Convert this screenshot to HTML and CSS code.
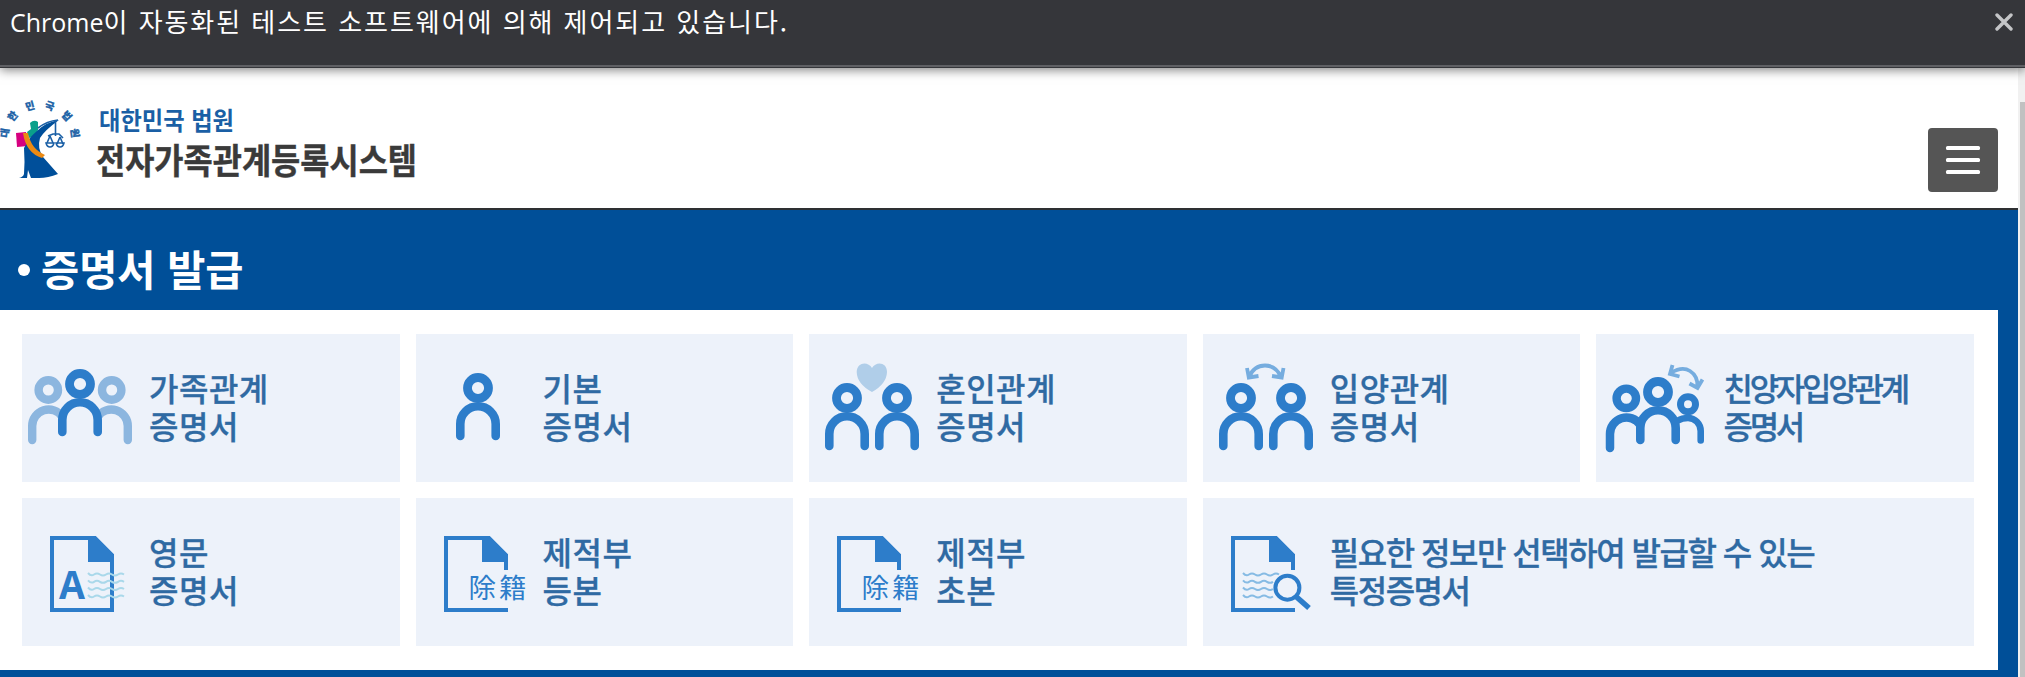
FILE: index.html
```html
<!DOCTYPE html>
<html lang="ko">
<head>
<meta charset="utf-8">
<title>전자가족관계등록시스템</title>
<link rel="stylesheet" href="styles.css">
</head>
<body>
<svg class="defs" aria-hidden="true">
  <defs>
    <g id="person" fill="none" stroke="#2d7dca">
      <circle cx="0" cy="50" r="10.5" stroke-width="8.8"/>
      <path d="M-17.7 98V86a17.7 17.7 0 0 1 35.4 0V98" stroke-width="8.6" stroke-linecap="round"/>
    </g>
    <g id="fold"><path d="M66 38h7L92 57v7H66z" fill="#2d7dca"/></g>
    <g id="open-doc">
      <path d="M90 72V57L73 40H30V112H92" fill="none" stroke="#2d7dca" stroke-width="4"/>
      <use href="#fold"/>
    </g>
    <path id="wave" d="M0 -1q3 3.500 6 1.500t6 0t6 0t6 0t6 0t6 0" fill="none" stroke-width="2"/>
    <path id="wave-short" d="M0 -1q3 3.500 6 1.500t6 0t6 0t6 0t6 0" fill="none" stroke-width="2"/>
  </defs>
</svg>
<div class="infobar">
  <p class="infobar-text"><span class="latin">Chrome</span>이 자동화된 테스트 소프트웨어에 의해 제어되고 있습니다.</p>
  <svg class="close" viewBox="0 0 18 18"><path d="M2 2l14 14M16 2L2 16" stroke="#c4c5c7" stroke-width="3.4" stroke-linecap="round"/></svg>
</div>
<div class="viewport">
  <div class="page">
    <header class="header">
      <svg class="logo" viewBox="0 0 430 100">
        <g class="emblem-text">
          <text transform="translate(8.500 43.500) rotate(-82)">대</text>
          <text transform="translate(15.500 28.500) rotate(-50)">한</text>
          <text transform="translate(31 19.500) rotate(-15)">민</text>
          <text transform="translate(48.500 19.500) rotate(18)">국</text>
          <text transform="translate(64 28.500) rotate(48)">법</text>
          <text transform="translate(71.500 43.500) rotate(82)">원</text>
        </g>
        <path d="M30 33q4-4 8-1v8q-1 4-4 6l-5 2-2-6 4-3z" fill="#0aa08b"/>
        <path d="M16 43l10-1 2 14-11 1z" fill="#d6007f"/>
        <path d="M24 84q1-12 0-26l4-7q2-4 9-10 9-9 22-11-14 10-19 18-3 10 3 19l15 17q-10 4-19 4l-8 0-3-8-1 8h-8q4-1 5-4z" fill="#004f9a"/>
        <path d="M23 43l5 0q3 16 17 22l-3 3q-16-5-19-25z" fill="#ec8a13"/>
        <path d="M38 38q9-7 20-8M55.500 31v15M48 46l5-2h6l4 4M50 46l-3 7M50 46l3 7M60 47l-3 7M60 47l3 7" fill="none" stroke="#1a5fa5" stroke-width="1.600"/>
        <path d="M46 53h8q-1 4-4 4t-4-4zM56 53h8q-1 4-4 4t-4-4z" fill="none" stroke="#1a5fa5" stroke-width="1.500"/>
        <text class="court" x="99" y="40" textLength="135" lengthAdjust="spacingAndGlyphs">대한민국 법원</text>
        <text class="system" x="96" y="83.500" textLength="321" lengthAdjust="spacingAndGlyphs">전자가족관계등록시스템</text>
      </svg>
      <button class="menu" aria-label="메뉴"><i></i><i></i><i></i></button>
    </header>
    <main class="main">
      <h1 class="title"><span class="dot"></span><span class="title-text">증명서 발급</span></h1>
      <div class="panel">
        <a class="card">
          <svg class="icon" viewBox="0 0 127 148">
            <g fill="none" stroke="#8cb6df">
              <circle cx="26.300" cy="56" r="9.700" stroke-width="8.400"/>
              <circle cx="89.700" cy="56" r="9.700" stroke-width="8.400"/>
              <path d="M10.200 106V92a16.500 16.500 0 0 1 30-9.500M105.800 106V92a16.500 16.500 0 0 0-30-9.500" stroke-width="8.400" stroke-linecap="round"/>
            </g>
            <use href="#person" x="58"/>
          </svg>
          <span class="label">가족관계<br>증명서</span>
        </a>
        <a class="card">
          <svg class="icon" viewBox="0 0 127 148"><use href="#person" x="62" y="4"/></svg>
          <span class="label">기본<br>증명서</span>
        </a>
        <a class="card">
          <svg class="icon" viewBox="0 0 127 148">
            <path d="M63 58Q48 50 47.700 38C48 28 59 27 63 34C67 27 78 28 78 38Q77.500 50 63 58z" fill="#b0cee9"/>
            <use href="#person" x="38" y="14"/><use href="#person" x="88" y="14"/>
          </svg>
          <span class="label">혼인관계<br>증명서</span>
        </a>
        <a class="card">
          <svg class="icon" viewBox="0 0 127 148">
            <path d="M46 43Q51 31.500 62 31.500T78 43M44 34l1.800 9.500L55.500 42M80.500 34l-1.800 9.500L69 42" fill="none" stroke="#76addf" stroke-width="3.800"/>
            <use href="#person" x="38" y="14"/><use href="#person" x="88" y="14"/>
          </svg>
          <span class="label">입양관계<br>증명서</span>
        </a>
        <a class="card">
          <svg class="icon" viewBox="0 0 127 148">
            <path d="M75 39Q86 32 94 37T101.500 53M76.500 31l-2.500 9 9.500 2.500M93.500 49.500l8 4.500 5-8.500" fill="none" stroke="#76addf" stroke-width="3.800"/>
            <g fill="none" stroke="#2d7dca">
              <circle cx="30.300" cy="64.300" r="9.700" stroke-width="8.400"/>
              <path d="M14 114V100a16.500 16.500 0 0 1 30-9.500" stroke-width="8.500" stroke-linecap="round"/>
              <circle cx="92" cy="70.300" r="7.500" stroke-width="7"/>
              <path d="M82 86.500Q86 84 92 84A12.700 13 0 0 1 104.700 97V106.500" stroke-width="6.600" stroke-linecap="round"/>
            </g>
            <use href="#person" x="62" y="8"/>
          </svg>
          <span class="label tight">친양자입양관계<br>증명서</span>
        </a>
        <a class="card">
          <svg class="icon" viewBox="0 0 127 148">
            <path d="M30 40H73L90 57V112H30z" fill="none" stroke="#2d7dca" stroke-width="4"/>
            <use href="#fold"/>
            <g stroke="#a9d8ea"><use href="#wave" x="66" y="76"/><use href="#wave" x="66" y="83.300"/><use href="#wave" x="66" y="90.500"/><use href="#wave" x="66" y="98"/></g>
            <text class="letter" x="37" y="100.500" textLength="26" lengthAdjust="spacingAndGlyphs">A</text>
          </svg>
          <span class="label">영문<br>증명서</span>
        </a>
        <a class="card">
          <svg class="icon" viewBox="0 0 127 148"><use href="#open-doc"/><text class="hanja" x="52.500 83" y="99.500">除籍</text></svg>
          <span class="label">제적부<br>등본</span>
        </a>
        <a class="card">
          <svg class="icon" viewBox="0 0 127 148"><use href="#open-doc"/><text class="hanja" x="52.500 83" y="99.500">除籍</text></svg>
          <span class="label">제적부<br>초본</span>
        </a>
        <a class="card wide">
          <svg class="icon" viewBox="0 0 127 148">
            <use href="#open-doc"/>
            <g stroke="#86bbe4"><use href="#wave" x="40" y="76"/><use href="#wave-short" x="40" y="83.300"/><use href="#wave-short" x="40" y="90.500"/><use href="#wave-short" x="40" y="98"/></g>
            <circle cx="84.400" cy="89.700" r="12" fill="#edf2fa" stroke="#2d7dca" stroke-width="4"/>
            <path d="M93 98.500L106 110" stroke="#2d7dca" stroke-width="5.500"/>
          </svg>
          <span class="label sentence">필요한 정보만 선택하여 발급할 수 있는<br>특정증명서</span>
        </a>
      </div>
    </main>
  </div>
  <div class="scrollbar"><div class="thumb"></div></div>
</div>
</body>
</html>
```
FILE: styles.css
```css
* { box-sizing: border-box; }
body {
  margin: 0;
  height: 677px;
  overflow: hidden;
  display: flex;
  flex-direction: column;
  background: #fff;
  font-family: "Noto Sans CJK KR", sans-serif;
}
.defs { position: absolute; width: 0; height: 0; }
.infobar {
  position: relative;
  z-index: 1;
  flex: none;
  display: flex;
  justify-content: space-between;
  align-items: flex-start;
  height: 68px;
  padding: 0 12px 0 10px;
  background: linear-gradient(#35363a 65px, #5f6064 65px, #5f6064 67px, #35363a 67px);
  box-shadow: 0 2px 10px rgba(0, 0, 0, .5);
}
.infobar-text {
  margin: 0;
  padding-top: 2px;
  color: #fff;
  font-size: 26px;
  line-height: 38px;
  letter-spacing: 1.95px;
  white-space: nowrap;
}
.latin { font-family: "Open Sans", sans-serif; font-size: 25px; letter-spacing: 0; }
.close { width: 18px; height: 18px; margin-top: 13px; }
.viewport { flex: 1; display: flex; min-height: 0; }
.page { flex: 1; }
.header {
  display: flex;
  justify-content: space-between;
  height: 142px;
  padding: 22px 20px 0 0;
  border-bottom: 2px solid #2e3033;
}
.logo { width: 430px; height: 100px; }
.emblem-text { fill: #1a5fa5; stroke: #1a5fa5; stroke-width: .5px; font-size: 10px; font-weight: 700; text-anchor: middle; }
.court { fill: #1a5fa5; font-size: 25px; font-weight: 700; }
.system { fill: #3a3a3a; stroke: #3a3a3a; stroke-width: .4px; font-size: 35px; font-weight: 700; }
.menu {
  display: flex;
  flex-direction: column;
  align-items: center;
  justify-content: center;
  gap: 8px;
  width: 70px;
  height: 64px;
  margin-top: 38px;
  padding: 0;
  border: 0;
  border-radius: 4px;
  background: #555;
}
.menu i { width: 34px; height: 4px; border-radius: 1.5px; background: #fff; }
.main { height: 480px; padding-right: 20px; background: #004f98; }
.title {
  display: flex;
  align-items: center;
  gap: 11px;
  height: 100px;
  margin: 0;
  padding: 20px 0 0 18px;
  color: #fff;
  font-size: 41.5px;
  line-height: 60px;
  font-weight: 700;
}
.title-text { padding-bottom: 4px; }
.dot { width: 12px; height: 12px; border-radius: 50%; background: #fff; }
.panel {
  display: grid;
  grid-template-columns: repeat(5, 1fr);
  grid-auto-rows: 148px;
  gap: 16px;
  padding: 24px 24px 24px 22px;
  background: #fff;
}
.card { display: flex; align-items: center; min-width: 0; background: #edf2fa; }
.wide { grid-column: span 2; }
.icon { flex: none; width: 127px; height: 148px; }
.label {
  padding-bottom: 4px;
  color: #2f6aa3;
  font-size: 32px;
  line-height: 38px;
  font-weight: 500;
  letter-spacing: .5px;
  -webkit-text-stroke: .3px #2f6aa3;
  white-space: nowrap;
}
.tight { letter-spacing: -3.2px; }
.sentence { letter-spacing: -1.5px; }
.letter { fill: #2d7dca; font: 700 40px "Open Sans", sans-serif; }
.hanja { fill: #2d7dca; font: 400 27.5px "Noto Sans CJK KR", sans-serif; }
.scrollbar { width: 7px; padding: 34px 0 0 2px; background: #f1f1f1; }
.thumb { height: 100%; background: #c1c1c1; }
```
